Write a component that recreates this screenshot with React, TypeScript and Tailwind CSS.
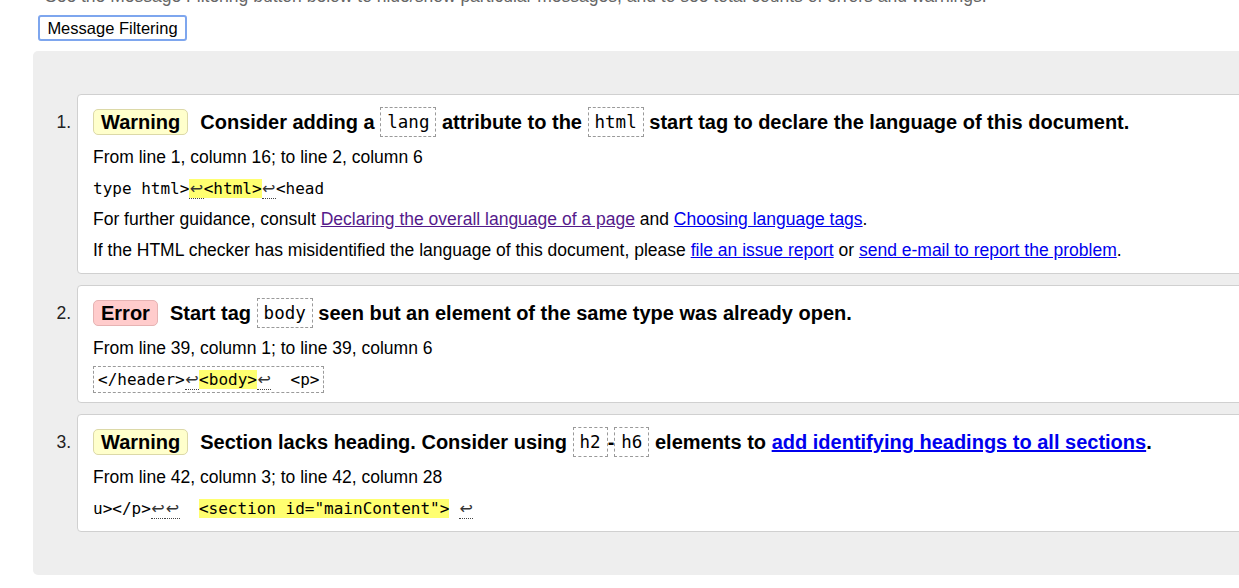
import React from "react";

const mono = "font-['DejaVu_Sans_Mono','Liberation_Mono',monospace]";

function Ret() {
  return (
    <span className="px-[0.5px] border-b border-dotted border-[#444] text-[#333] font-['DejaVu_Sans',sans-serif]">
      ↩
    </span>
  );
}

function Hl({ children }: { children: React.ReactNode }) {
  return <span className="bg-[#ffff70]">{children}</span>;
}

function Code({ children }: { children: React.ReactNode }) {
  return (
    <span
      className={`${mono} inline-block align-top h-[30px] leading-[28px] px-[6px] border border-dashed border-[#9a9a9a] text-[17.5px] font-normal`}
    >
      {children}
    </span>
  );
}

function Badge({ kind }: { kind: "Warning" | "Error" }) {
  const color =
    kind === "Warning"
      ? "bg-[#ffffcc] border-[#dcd9a8]"
      : "bg-[#ffcccc] border-[#e6b3b3]";
  return (
    <span
      className={`inline-block align-top mt-[2px] mr-[12px] h-[26px] leading-[24px] px-[7px] border rounded-[5px] ${color}`}
    >
      {kind}
    </span>
  );
}

function Row({ n, children }: { n: number; children: React.ReactNode }) {
  return (
    <div className="flex">
      <div className="w-[44px] shrink-0 pr-[6px] pt-[13px] text-right leading-[30px] text-[#222]">
        {n}.
      </div>
      <div className="flex-1 bg-white border border-[#d0d0d0] rounded-[4px] pl-[15px] pt-[12px] pb-[7px]">
        {children}
      </div>
    </div>
  );
}

function Line({ children, code }: { children: React.ReactNode; code?: boolean }) {
  return (
    <div
      className={`h-[31px] leading-[31px] whitespace-pre ${
        code ? `${mono} text-[16px]` : ""
      }`}
    >
      {children}
    </div>
  );
}

export default function App() {
  return (
    <div className="w-[1239px] h-[588px] overflow-hidden bg-white text-black text-[17.5px] font-['Liberation_Sans',Arial,sans-serif]">
      <p className="mt-[-14px] ml-[45px] h-[20px] leading-[20px] whitespace-nowrap text-[#666]">
        See the Message Filtering button below to hide/show particular messages, and to see total counts of errors and warnings.
      </p>
      <div className="mt-[9px] ml-[38px]">
        <button className="h-[26px] w-[149px] border-2 border-[#7ea6ee] rounded-[3px] bg-white text-[16.5px] leading-[20px] text-black">
          Message Filtering
        </button>
      </div>

      <div className="mt-[10px] ml-[33px] w-[1260px] rounded-[5px] bg-[#eeeeee] pt-[43px] pb-[43px] flex flex-col gap-[11px]">
        <Row n={1}>
          <div className="h-[30px] leading-[30px] text-[20px] font-bold whitespace-nowrap">
            <Badge kind="Warning" />
            Consider adding a <Code>lang</Code> attribute to the <Code>html</Code> start tag to declare the language of this document.
          </div>
          <div className="mt-[5px]">
            <Line>From line 1, column 16; to line 2, column 6</Line>
            <Line code>
              type html&gt;
              <Hl>
                <Ret />
                &lt;html&gt;
              </Hl>
              <Ret />
              &lt;head
            </Line>
            <Line>
              For further guidance, consult{" "}
              <a href="#" className="underline text-[#551a8b]">
                Declaring the overall language of a page
              </a>{" "}
              and{" "}
              <a href="#" className="underline text-[#0000ee]">
                Choosing language tags
              </a>
              .
            </Line>
            <Line>
              If the HTML checker has misidentified the language of this document, please{" "}
              <a href="#" className="underline text-[#0000ee]">
                file an issue report
              </a>{" "}
              or{" "}
              <a href="#" className="underline text-[#0000ee]">
                send e-mail to report the problem
              </a>
              .
            </Line>
          </div>
        </Row>

        <Row n={2}>
          <div className="h-[30px] leading-[30px] text-[20px] font-bold whitespace-nowrap">
            <Badge kind="Error" />
            Start tag <Code>body</Code> seen but an element of the same type was already open.
          </div>
          <div className="mt-[5px]">
            <Line>From line 39, column 1; to line 39, column 6</Line>
            <Line code>
              <span className="inline-block align-top mt-[2px] h-[27px] leading-[25px] px-[4px] border border-dashed border-[#9a9a9a]">
                &lt;/header&gt;
                <Ret />
                <Hl>&lt;body&gt;</Hl>
                <Ret />
                {"  "}&lt;p&gt;
              </span>
            </Line>
          </div>
        </Row>

        <Row n={3}>
          <div className="h-[30px] leading-[30px] text-[20px] font-bold whitespace-nowrap">
            <Badge kind="Warning" />
            Section lacks heading. Consider using <Code>h2</Code>-<Code>h6</Code> elements to{" "}
            <a href="#" className="underline text-[#0000ee]">
              add identifying headings to all sections
            </a>
            .
          </div>
          <div className="mt-[5px]">
            <Line>From line 42, column 3; to line 42, column 28</Line>
            <Line code>
              u&gt;&lt;/p&gt;
              <Ret />
              <Ret />
              {"  "}
              <Hl>&lt;section id="mainContent"&gt;</Hl> <Ret />
            </Line>
          </div>
        </Row>
      </div>
    </div>
  );
}
